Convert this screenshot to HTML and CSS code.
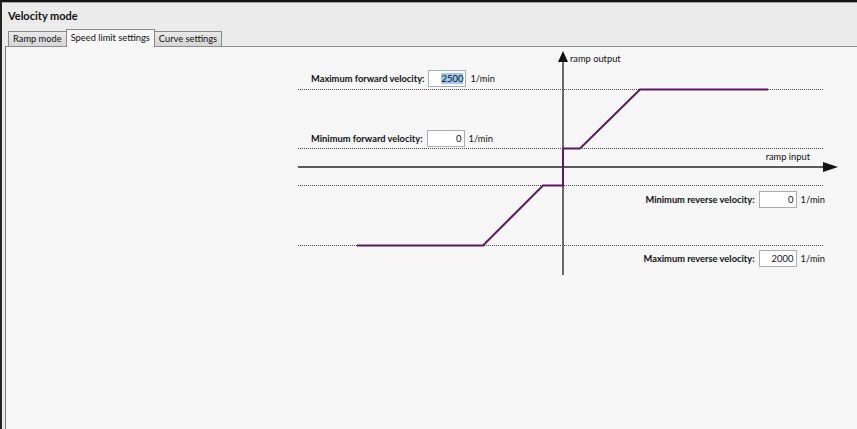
FILE: index.html
```html
<!DOCTYPE html>
<html lang="en">
<head>
    <meta charset="UTF-8">
    <title>Velocity mode</title>
    <link rel="stylesheet" href="styles.css">
</head>
<body>
    <div class="window">
        <div class="header">
            <div class="title">Velocity mode</div>
            <div class="tabs">
                <div class="tab">Ramp mode</div>
                <div class="tab active">Speed limit settings</div>
                <div class="tab">Curve settings</div>
            </div>
        </div>
        <div class="panel">
            <div class="diagram">
                <svg class="chart" width="545" height="232" viewBox="0 0 545 232">
                    <!-- dotted limit lines -->
                    <g stroke="#444" stroke-width="1" stroke-dasharray="1 1">
                        <line x1="0" y1="42.5" x2="525" y2="42.5"/>
                        <line x1="0" y1="101.5" x2="525" y2="101.5"/>
                        <line x1="0" y1="138.5" x2="525" y2="138.5"/>
                        <line x1="0" y1="198.5" x2="525" y2="198.5"/>
                    </g>
                    <!-- axes -->
                    <line x1="0" y1="120" x2="528" y2="120" stroke="#5a5a5a" stroke-width="2"/>
                    <polygon points="525,115 540,120 525,125" fill="#111"/>
                    <line x1="265" y1="12" x2="265" y2="228" stroke="#6a6a6a" stroke-width="2"/>
                    <polygon points="265,4 260,15 270,15" fill="#111"/>
                    <!-- ramp curve -->
                    <polyline points="59,198.5 185,198.5 245,138.5 265,138.5 265,101.5 282,101.5 342,42.5 470,42.5"
                              fill="none" stroke="#5c1a5e" stroke-width="2"/>
                    <text x="272" y="15" class="axis-label">ramp output</text>
                    <text x="512" y="113" class="axis-label" text-anchor="end">ramp input</text>
                </svg>

                <div class="field-row left row-max-fwd">
                    <span class="label">Maximum forward velocity:</span>
                    <div class="field"><span class="selected">2500</span></div>
                    <span class="unit">1/min</span>
                </div>
                <div class="field-row left row-min-fwd">
                    <span class="label">Minimum forward velocity:</span>
                    <div class="field">0</div>
                    <span class="unit">1/min</span>
                </div>
                <div class="field-row right row-min-rev">
                    <span class="label">Minimum reverse velocity:</span>
                    <div class="field">0</div>
                    <span class="unit">1/min</span>
                </div>
                <div class="field-row right row-max-rev">
                    <span class="label">Maximum reverse velocity:</span>
                    <div class="field">2000</div>
                    <span class="unit">1/min</span>
                </div>
            </div>
        </div>
    </div>
</body>
</html>
```

FILE: styles.css
```css
html, body {
    margin: 0;
    padding: 0;
}
body {
    font-family: Lato, "Open Sans", sans-serif;
    color: #111;
    background-color: #ececec;
}
.window {
    width: 857px;
    height: 429px;
    box-sizing: border-box;
    border-top: 2px solid #111;
    border-left: 2px solid #222;
    display: flex;
    flex-direction: column;
    overflow: hidden;
}
.header {
    background-color: #ebebeb;
    border-top: 1px solid #a8a8a8;
    padding: 0 0 0 6px;
}
.title {
    font-size: 11px;
    font-weight: bold;
    padding: 6px 0 0 0;
    height: 17px;
}
.tabs {
    display: flex;
    align-items: flex-end;
    height: 20px;
}
.tab {
    font-size: 9.3px;
    padding: 0 4px;
    height: 14px;
    line-height: 14px;
    border: 1px solid #8a8a8a;
    border-bottom: none;
    background: linear-gradient(#e9e9e9, #d6d6d6);
    margin-right: -1px;
}
.tab.active {
    height: 17px;
    line-height: 15px;
    background-color: #f6f6f6;
    background-image: none;
    position: relative;
    z-index: 1;
    margin-bottom: -1px;
    padding: 0 4px;
}
.panel {
    flex: 1;
    margin-left: 3px;
    background-color: #f5f6f5;
    border-top: 1px solid #8c8c8c;
    border-left: 1px solid #7a7a7a;
}
.diagram {
    position: relative;
    width: 545px;
    height: 232px;
    margin-left: 292px;
}
.chart {
    display: block;
}
.axis-label {
    font-family: Lato, "Open Sans", sans-serif;
    font-size: 9.3px;
    fill: #111;
}
.field-row {
    position: absolute;
    display: flex;
    align-items: center;
    font-size: 9.3px;
}
.field-row .label {
    font-weight: bold;
    margin-right: 4px;
}
.field {
    width: 32px;
    height: 15px;
    line-height: 15px;
    border: 1px solid #abadb3;
    background-color: #fff;
    text-align: right;
    padding: 0 2px;
    font-size: 9.5px;
}
.field .selected {
    background-color: #9dc8ef;
}
.unit {
    margin-left: 4px;
}
.left {
    left: 13px;
}
.right {
    right: 18px;
}
.row-max-fwd {
    top: 23px;
}
.row-min-fwd {
    top: 83px;
}
.row-min-rev {
    top: 144px;
}
.row-max-rev {
    top: 203px;
}
```
